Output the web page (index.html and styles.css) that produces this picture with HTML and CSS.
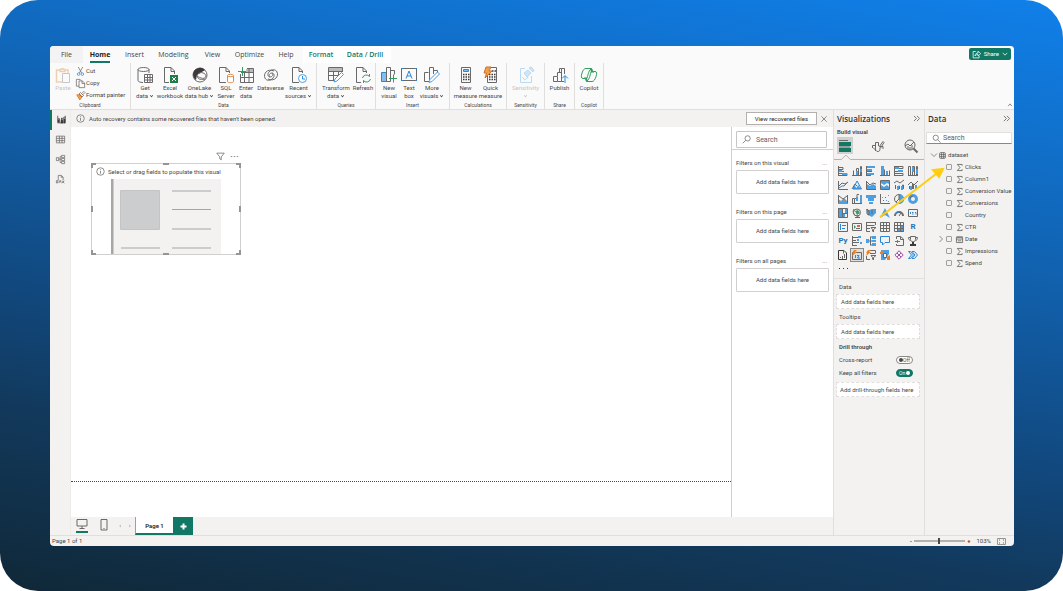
FILE: index.html
```html
<!DOCTYPE html>
<html lang="en">
<head>
<meta charset="utf-8">
<meta name="viewport" content="width=device-width, initial-scale=1">
<title>Report editor</title>
<link rel="stylesheet" href="styles.css">
</head>
<body>
<div class="backdrop">
<div class="app">

<header class="topbar">
  <nav class="tabs">
    <button class="tab file">File</button>
    <button class="tab active"><span>Home</span></button>
    <button class="tab">Insert</button>
    <button class="tab">Modeling</button>
    <button class="tab">View</button>
    <button class="tab">Optimize</button>
    <button class="tab">Help</button>
    <button class="tab context">Format</button>
    <button class="tab context">Data / Drill</button>
  </nav>
  <button class="share"><svg class="i9" viewBox="0 0 12 12"><path d="M5 2H1.500v8.500h8V8M4 8c0-3 2-4 4-4V1.500L11.500 5 8 8V6C6 6 5 6.500 4 8z"/></svg>Share<svg class="i6" viewBox="0 0 8 8"><path d="M1 2.500l3 3 3-3"/></svg></button>
</header>

<section class="ribbon">
  <div class="group clipboard">
    <div class="clip">
      <button class="tool off"><svg class="i16" viewBox="0 0 16 16"><path class="paleo" d="M5 3H1.500v12H7M10 3h3v3M5 4.500h5v-2H8.500a1 1 0 0 0-2 0H5z"/><path class="pale" d="M7.500 6.500h7v9h-7z"/></svg><span>Paste</span></button>
      <div class="stack">
        <button class="small"><svg class="i9" viewBox="0 0 12 12"><path d="M3 0l4.500 8M9 0L4.500 8"/><circle class="bl" cx="3.500" cy="9.500" r="1.700"/><circle class="bl" cx="8.500" cy="9.500" r="1.700"/></svg>Cut</button>
        <button class="small"><svg class="i9" viewBox="0 0 12 12"><path d="M4 9.500H.5v-9h5L7 2M4 2.500h4.500l3 3v6H4zM8 2.500V6h3.500"/></svg>Copy</button>
        <button class="small"><svg class="i9" viewBox="0 0 12 12"><path class="of" d="M1 5l5 0 2 3-3 4z"/><path d="M4 4l2-2 4 4-2 2zM8 3l2.500-2.500 1.500 1.500L9 5"/></svg>Format painter</button>
      </div>
    </div>
    <h6>Clipboard</h6>
  </div>
  <div class="group data">
    <div class="tools">
      <button class="tool"><svg class="i16" viewBox="0 0 16 16"><ellipse cx="6.500" cy="2.500" rx="5.500" ry="2"/><path d="M1 2.500v11c0 1 2 2 5 2M12 2.500V6"/><path class="w" d="M7.500 7.500h8v8h-8z"/><path d="M7 10.500h8.500M7 13h8.500M10.500 7.500v8M13 7.500v8"/></svg><span>Get<br>data<i></i></span></button>
      <button class="tool"><svg class="i16" viewBox="0 0 16 16"><path d="M7 15.500H2.500V.5H9L12.500 4v3M9 .5V4.500h3.500"/><path class="xl" d="M8 8h8v8H8z"/><path class="ws" d="M10 10l4 4M14 10l-4 4"/></svg><span>Excel<br>workbook</span></button>
      <button class="tool"><svg class="i16" viewBox="0 0 16 16"><circle cx="8" cy="8" r="7"/><path class="dk" d="M1 8a7 7 0 0 1 12-5L5 8 4 13A7 7 0 0 1 1 8z"/><path d="M5 8c4-5 9-1 9 1s-3 3-5 2-4-1-4-3zM5 9c1 4 5 4 8 3"/></svg><span>OneLake<br>data hub<i></i></span></button>
      <button class="tool"><svg class="i16" viewBox="0 0 16 16"><path d="M8 15.500H1.500V.5H8L11.500 4v2M8 .5V4.500h3.500"/><path class="wo" d="M9.500 9v5.500c0 1.500 6 1.500 6 0V9"/><ellipse class="wo" cx="12.500" cy="8.500" rx="3" ry="1.200"/></svg><span>SQL<br>Server</span></button>
      <button class="tool"><svg class="i16" viewBox="0 0 16 16"><path class="gf" d="M8 2h7v3H8z"/><path d="M9 1.500h6.500v14h-13V7M3 5.500h12.500M3 10.500h12.500M6.500 6v9M11 2v13"/><path class="gr" d="M0 4.500h8M4.500 0v9"/></svg><span>Enter<br>data</span></button>
      <button class="tool"><svg class="i16" viewBox="0 0 16 16"><path d="M11 4C4 1 0 7 2 11c1 3 6 3 8 0 2-2 1-5-1-5S5 8 7 10M5 12c7 3 11-3 9-7-1-3-6-3-8 0-2 2-1 5 1 5s4-2 2-4"/></svg><span>Dataverse</span></button>
      <button class="tool"><svg class="i16" viewBox="0 0 16 16"><path d="M8 15.500H1.500V.5H8L11.500 4v2M8 .5V4.500h3.500"/><circle class="wb" cx="11.500" cy="11.500" r="4"/><path class="bl" d="M11.500 9v3H14"/></svg><span>Recent<br>sources<i></i></span></button>
    </div>
    <h6>Data</h6>
  </div>
  <div class="group queries">
    <div class="tools">
      <button class="tool"><svg class="i16" viewBox="0 0 16 16"><path class="gf" d="M1 1h14v3H1z"/><path d="M.5.500h14V5M.5.500v13H6M.5 4.500h14M.5 8.500H10M5.500 4v9M10.500 4v4"/><path class="wb" d="M6 15l1-3 6.500-6.500 2 2L9 14z"/></svg><span>Transform<br>data<i></i></span></button>
      <button class="tool"><svg class="i16" viewBox="0 0 16 16"><path d="M6 15.500H1.500V.5H8L11.500 4v2M8 .5V4.500h3.500"/><path class="gr" d="M7.500 11a4 4 0 0 1 7-1.500V7M15.500 12a4 4 0 0 1-7 1.500V16"/></svg><span>Refresh</span></button>
    </div>
    <h6>Queries</h6>
  </div>
  <div class="group insert">
    <div class="tools">
      <button class="tool"><svg class="i16" viewBox="0 0 16 16"><path class="bf" d="M.5 5.500h5v9h-5z"/><path d="M5.500.5h4v14h-4zM9.500 3.500h4v4"/><path class="gr" d="M8 11.500h8M12.500 7.500v8"/></svg><span>New<br>visual</span></button>
      <button class="tool"><svg class="i16" viewBox="0 0 16 16"><path d="M.5 1.500h15v12H.5z"/><path class="bl" d="M5 11.500L8 4l3 7.500M6 9h4M0 1.500h2M14 1.500h2M0 13.500h2M14 13.500h2"/></svg><span>Text<br>box</span></button>
      <button class="tool"><svg class="i16" viewBox="0 0 16 16"><path d="M5 14.500H.5v-9h4M5.500 13V.500h4V7M9.500 3.500h4v3"/><path class="wb" d="M5 15.500l1-3 7.500-7.500 2 2L8 14.500z"/></svg><span>More<br>visuals<i></i></span></button>
    </div>
    <h6>Insert</h6>
  </div>
  <div class="group calc">
    <div class="tools">
      <button class="tool"><svg class="i16" viewBox="0 0 16 16"><path d="M3.500.5h9v15h-9z"/><path class="bf" d="M5.500 2.500h5v2h-5z"/><path class="dots" d="M5 7.500h6.500M5 10h6.500M5 12.500h6.500"/></svg><span>New<br>measure</span></button>
      <button class="tool"><svg class="i16" viewBox="0 0 16 16"><path d="M4.500.5h9v15h-9z"/><path class="dots" d="M6 7.500h6.500M6 10h6.500M6 12.500h6.500M9 4h4"/><path class="of" d="M3 0h5L6 4h3L2 11l1.500-5H1z"/></svg><span>Quick<br>measure</span></button>
    </div>
    <h6>Calculations</h6>
  </div>
  <div class="group sens">
    <div class="tools">
      <button class="tool off"><svg class="i16" viewBox="0 0 16 16"><path class="paleb" d="M7 1.500H2.500v14h11V9M4.500 10l2 3 4-3"/><path class="palef" d="M6 6l4-3 3 3-4 4zM11 1l2-1 3 3-1 2z"/></svg><span>Sensitivity<br><i></i></span></button>
    </div>
    <h6>Sensitivity</h6>
  </div>
  <div class="group pub">
    <div class="tools">
      <button class="tool"><svg class="i16" viewBox="0 0 16 16"><path d="M1.500 9.500h4v5h-4zM5.500 9V5.500h4v9h-4M9.500 9V1.500h-2V5M9.500 1.500h3V7M9.500 14.500H12"/><path class="bl" d="M13 16V9M10 11.500L13 8.500l3 3"/></svg><span>Publish</span></button>
    </div>
    <h6>Share</h6>
  </div>
  <div class="group pub last">
    <div class="tools">
      <button class="tool"><svg class="i16" viewBox="0 0 16 16"><path class="gr" d="M5 1.500h5c1 0 1.500 2 2 3h2c2 0 2 2 1 5s-2 5-4 5H6c-1 0-1.500-2-2-3H2C0 11.500 0 9 1 6s2-4.500 4-4.500z"/><path class="gr" d="M11 1.500C8 2 7 8 6 11M5 14.500c3-.5 4-6 5-9.500h3M3 11h3"/><path class="gfill" d="M9 2h2l1 3h-2zM4 11h2l1 3.500H5.500z"/></svg><span>Copilot</span></button>
    </div>
    <h6>Copilot</h6>
  </div>
  <button class="collapse" aria-label="Collapse ribbon"><svg class="i6" viewBox="0 0 8 8"><path d="M1.500 5.500l2.500-3 2.500 3"/></svg></button>
</section>

<main class="main">
  <nav class="rail">
    <button class="on" aria-label="Report view"><svg class="i9" viewBox="0 0 12 12"><path class="bold" d="M1 1v9.500h10V1M1 5h2.500v5M6 10V4h1v6M9 10V3h2"/><path class="dk" d="M1 6h2v4H1zM5 7h3v4H5zM9 5h2v6H9z"/></svg></button>
    <button aria-label="Table view"><svg class="i9" viewBox="0 0 12 12"><path d="M.5 1.500h11v9H.5zM.5 4.500h11M.5 7.500h11M4.500 1.500v9M8 1.500v9"/></svg></button>
    <button aria-label="Model view"><svg class="i9" viewBox="0 0 12 12"><path d="M.5 3.500h3v4h-3zM7.500.5h4v3h-4zM7.500 4.500h4v3h-4zM7.500 8.500h4v3h-4zM4 5.500h3M5.500 2v8H7M5.500 2H7"/></svg></button>
    <button aria-label="DAX query view"><svg class="i9" viewBox="0 0 12 12"><path d="M3 7V.5h4L9.500 3v4M7 .5V3h2.500M.5 7.500h2v3h-2zM4 10.500L5.500 7 7 10.500M8 7.500l3 3.500M11 7.500L8 11"/></svg></button>
  </nav>

  <div class="center">
    <div class="notice">
      <svg class="i9" viewBox="0 0 12 12"><circle cx="6" cy="6" r="5"/><path d="M6 5v4M6 3v1"/></svg>
      <p>Auto recovery contains some recovered files that haven't been opened.</p>
      <button class="recover">View recovered files</button>
      <button class="close" aria-label="Dismiss"><svg class="i6" viewBox="0 0 8 8"><path d="M.5.5l7 7M7.500.5l-7 7"/></svg></button>
    </div>
    <div class="work">
      <div class="canvas">
        <div class="visual">
          <div class="visualtools"><svg class="i9" viewBox="0 0 12 12"><path d="M1 1.500h10L7 6.500v4L5 9V6.500z"/></svg><svg class="i9" viewBox="0 0 12 12"><path d="M1 6h2M5 6h2M9 6h2"/></svg></div>
          <p class="hint"><svg class="i9" viewBox="0 0 12 12"><circle cx="6" cy="6" r="5"/><path d="M6 5v4M6 3v1"/></svg>Select or drag fields to populate this visual</p>
          <svg class="card" viewBox="0 0 110 75"><path class="c1" d="M0 0h110v75H0z"/><path class="c2" d="M0 0h2.500v75H0z"/><path class="c3" d="M9.500 11.500h39v39h-39z"/><path class="c4" d="M61 12h39M61 30.500h39M61 50h39M61 69h39M10 69h39"/></svg>
          <svg class="handles" viewBox="0 0 150 92"><path d="M1 5V1h4M72 1h6M145 1h4v4M149 43v6M149 87v4h-4M78 91h-6M5 91H1v-4M1 49v-6"/></svg>
        </div>
        <div class="pagebreak"></div>
      </div>
      <aside class="filters">
        <label class="find"><svg class="i9" viewBox="0 0 12 12"><circle cx="7.500" cy="4.500" r="3.500"/><path d="M5 7l-4 4"/></svg><input type="search" placeholder="Search" aria-label="Search filters"></label>
        <section><h4>Filters on this visual<b>...</b></h4><div class="drop">Add data fields here</div></section>
        <section><h4>Filters on this page<b>...</b></h4><div class="drop">Add data fields here</div></section>
        <section><h4>Filters on all pages<b>...</b></h4><div class="drop">Add data fields here</div></section>
      </aside>
    </div>
    <footer class="pages">
      <button class="desk" aria-label="Desktop layout"><svg class="i12" viewBox="0 0 12 12"><path d="M1 1.500h10v6.500H1zM6 8v2M3.500 10.500h5"/></svg></button>
      <button class="phone" aria-label="Mobile layout"><svg class="i12" viewBox="0 0 12 12"><path d="M3 .5h6v10.500H3zM5.500 9.500h1"/></svg></button>
      <button class="arrow" aria-label="Previous page"><svg class="i6" viewBox="0 0 8 8"><path d="M5 2L3 4l2 2z"/></svg></button>
      <button class="arrow" aria-label="Next page"><svg class="i6" viewBox="0 0 8 8"><path d="M3 2l2 2-2 2z"/></svg></button>
      <button class="page">Page 1</button>
      <button class="add" aria-label="New page"><svg class="i8" viewBox="0 0 7 7"><path d="M3.500.500v6M.5 3.500h6"/></svg></button>
    </footer>
  </div>

  <aside class="viz">
    <h2>Visualizations<svg class="i8" viewBox="0 0 8 8"><path d="M1 1l3 3-3 3M4.500 1l3 3-3 3"/></svg></h2>
    <h3>Build visual</h3>
    <div class="modes">
      <button class="sel" aria-label="Build visual"><svg class="i14" viewBox="0 0 14 14"><path d="M1 1.500h9M1 8h11"/><path class="teal" d="M1 3h12v4H1zM1 9h12v4H1z"/></svg></button>
      <button aria-label="Format visual"><svg class="i14" viewBox="0 0 14 14"><path d="M1.500 9V6.500h3V12M4.500 7V3.500h3V7M8 8l4-5.500 1 1L9.500 9M9 7.500h3V10M2 8.500l4 4c3 0 3-1 3-4"/></svg></button>
      <button aria-label="Analytics"><svg class="i14" viewBox="0 0 14 14"><circle cx="6" cy="6" r="5"/><path d="M1 7l3-2 2 2 4-4M4 7v3M6 8v3M8 6v4"/><path class="thick" d="M9.500 9.500l4 4"/></svg></button>
    </div>
    <svg class="notch" viewBox="0 0 91 6" preserveAspectRatio="xMinYMid meet"><path d="M0 5.500h7.500L12 1l4.500 4.500H91"/></svg>
    <div class="gallery">
      <button aria-label="Stacked bar chart"><svg viewBox="0 0 10 10"><path d="M.5 0v10M1 1.500h4v2H1M1 7.500h8v2H1M1 5.500h5"/><path class="b" d="M1 4h3v2H1zM4 7h5v2H4z"/></svg></button>
      <button aria-label="Stacked column chart"><svg viewBox="0 0 10 10"><path d="M0 9.500h10M1.500 9V4.500M4.500 9V2.500h2V9M8.500 9V.500h1V9"/><path class="b" d="M4 5h2v4H4zM8 3h2v3H8z"/></svg></button>
      <button aria-label="Clustered bar chart"><svg viewBox="0 0 10 10"><path d="M.5 0v10M1 5.500h5M1 9.500h4"/><path class="b" d="M1 0h8v2H1zM1 3h5v2H1zM1 7h7v2H1z"/></svg></button>
      <button aria-label="Clustered column chart"><svg viewBox="0 0 10 10"><path d="M0 9.500h10M4.500 9V3.500M9.500 9V4.500"/><path class="b" d="M1 0h3v9H1zM6 5h2v4H6z"/></svg></button>
      <button aria-label="100% stacked bar chart"><svg viewBox="0 0 10 10"><path d="M.5 0v10M1 .500h8v2H1M1 7.500h8v2H1M1 5.500h5"/><path class="b" d="M1 1h4v2H1zM4 4h5v2H4z"/></svg></button>
      <button aria-label="100% stacked column chart"><svg viewBox="0 0 10 10"><path d="M0 9.500h10M.500 9V.500h2V9M4.500 9V.500h2V9M8.500 9V.500h1V9"/><path class="b" d="M4 1h2v5H4zM8 3h2v5H8z"/></svg></button>

      <button aria-label="Line chart"><svg viewBox="0 0 10 10"><path d="M.5 1v8.500H10M1 6l3-3 3 1 3-2"/><path class="l" d="M1 8l3-2 2 0 4-4"/></svg></button>
      <button aria-label="Area chart"><svg viewBox="0 0 10 10"><path d="M0 9l3-5 2 2"/><path class="b" d="M4 9l2-4 3 4zM0 9l3-3 2 3z"/><path class="l" d="M1 9L5 1l4.500 8z"/></svg></button>
      <button aria-label="Stacked area chart"><svg viewBox="0 0 10 10"><path d="M.5 1v8.500H10M1 2l3 3 3-2 3 1"/><path class="b" d="M1 4l3 2 3-2 3 2v3H1z"/></svg></button>
      <button aria-label="100% stacked area chart"><svg viewBox="0 0 10 10"><path d="M.5.500h9v9h-9z"/><path class="b" d="M1 1h8v3L7 3 4 5 1 3zM1 5l3 2 3-2 2 2v2H1z"/></svg></button>
      <button aria-label="Line and stacked column chart"><svg viewBox="0 0 10 10"><path d="M1.500 9V5M4.500 9V6h1v3M8.500 9V5h1v4M0 3l3-2 3 2 4-3"/><path class="b" d="M3 6h2v4H3zM7 6h2v4H7z"/></svg></button>
      <button aria-label="Line and clustered column chart"><svg viewBox="0 0 10 10"><path d="M1.500 9V6M4.500 9V4h1v5M0 5l3-3 3 3 4-4"/><path class="b" d="M2 6h2v4H2zM7 5h2v5H7z"/></svg></button>

      <button aria-label="Ribbon chart"><svg viewBox="0 0 10 10"><path class="b" d="M0 5l3 2 3-3 4 4v2H0z"/><path d="M.500 1v8M9.500 1v8M1 2l4 3 4-3"/><path class="o" d="M1 6l3 2 3-2v2H1z"/></svg></button>
      <button aria-label="Waterfall chart"><svg viewBox="0 0 10 10"><path d="M0 9.500h10M.5 9V4.500h2V9M3 4.500h2V.5h2"/><path class="b" d="M4 3h2v4H4zM8 1h2v8H8z"/></svg></button>
      <button aria-label="Funnel chart"><svg viewBox="0 0 10 10"><path class="b" d="M0 1h10v3H0zM2 4h6v3H2zM3 8h4v2H3z"/></svg></button>
      <button aria-label="Scatter chart"><svg viewBox="0 0 10 10"><path d="M.5 0v9.500H10M3 6.500h1M5 3.500h1"/><path class="b" d="M2 3h1v1H2zM8 1h1v1H8zM6 6h1v1H6zM8 7h1v1H8z"/></svg></button>
      <button aria-label="Pie chart"><svg viewBox="0 0 10 10"><circle cx="5" cy="5" r="4.500"/><path class="b" d="M5 0a5 5 0 0 1 0 10z"/><path d="M5 0v5l-3 3"/></svg></button>
      <button aria-label="Donut chart"><svg viewBox="0 0 10 10"><circle class="donut" cx="5" cy="5" r="3.500"/><path d="M5 2a3 3 0 0 0-3 3"/></svg></button>

      <button aria-label="Treemap"><svg viewBox="0 0 10 10"><path class="b" d="M0 0h4v10H0zM7 1h3v4H7zM5 6h2v3H5z"/><path d="M.5.500h9v9h-9zM4.500 1v8M5 5.500h4"/></svg></button>
      <button aria-label="Map"><svg viewBox="0 0 10 10"><circle cx="5" cy="4.500" r="3.500"/><path class="g" d="M3 3l3-1 2 3-3 2z"/><path d="M2 1c-2 3 0 7 4 7v2M3 9.500h5"/></svg></button>
      <button aria-label="Filled map"><svg viewBox="0 0 10 10"><path class="b" d="M0 1l3 1 3-1 4 0v4l-4 4-4-2z"/><path d="M1 1l2 2v4L1 6zM6 2v4"/></svg></button>
      <button aria-label="Azure map"><svg viewBox="0 0 10 10"><path class="b" d="M5 0l5 10-5-3-5 3z"/></svg></button>
      <button aria-label="Gauge"><svg viewBox="0 0 10 10"><path class="thick" d="M1 8a4 4 0 0 1 8 0"/><path class="l" d="M1 8a4 4 0 0 1 4-4"/><path d="M5 8l2-3"/></svg></button>
      <button aria-label="Card"><svg viewBox="0 0 10 10"><path d="M.5 1.500h9v7h-9z"/><path class="l" d="M2.500 4v2M4 4.500h1.500M4 6h1.500M7 4.500h1v2"/></svg></button>

      <button aria-label="Multi-row card"><svg viewBox="0 0 10 10"><path d="M.5.500h9v9h-9z"/><path class="l" d="M2.500 2v6M4 3.500h4M4 6.500h3"/></svg></button>
      <button aria-label="KPI"><svg viewBox="0 0 10 10"><path d="M.5 1.500h9v7h-9z"/><path class="r" d="M5 3h3v2H5z"/><path class="g" d="M2 3l2 2-2 2z"/><path d="M4 6.500h4"/></svg></button>
      <button aria-label="Slicer"><svg viewBox="0 0 10 10"><path d="M0 .500h10M.5.500v9H4M.5 3.500h8M.5 6.500H4M9.500 1v2M5 5.500h5L7.500 7.500V10L6.500 9V7.500z"/></svg></button>
      <button aria-label="Table"><svg viewBox="0 0 10 10"><path d="M.5.500h9v9h-9zM.5 3.500h9M.5 6.500h9M3.500.500v9M6.500.500v9"/></svg></button>
      <button aria-label="Matrix"><svg viewBox="0 0 10 10"><path class="b" d="M4 7h6v3H4zM7 4h3v3H7z"/><path d="M.5.500h9v9h-9zM.5 3.500h9M.5 6.500h9M3.500.500v9M6.500.500v9"/></svg></button>
      <button class="letters" aria-label="R script visual">R</button>

      <button class="letters" aria-label="Python visual">Py</button>
      <button aria-label="Key influencers"><svg viewBox="0 0 10 10"><path d="M.5 0v10M1 1.500h5M1 4.500h3M1 6.500h6M1 9.500h4"/><path class="b" d="M6 0h3v2H6zM8 6h2v2H8zM5 3h2v2H5z"/></svg></button>
      <button aria-label="Decomposition tree"><svg viewBox="0 0 10 10"><path d="M2 5h4M4.500 1v8M4 1h2M4 9h2"/><path class="b" d="M0 3h3v4H0zM6 0h4v3H6zM6 4h4v2H6zM6 7h4v3H6z"/></svg></button>
      <button aria-label="Q&amp;A"><svg viewBox="0 0 10 10"><path class="l" d="M.5.500h9v6H5L2.500 9V6.500h-2z"/></svg></button>
      <button aria-label="Smart narrative"><svg viewBox="0 0 10 10"><path d="M2.500 3V.5h4L9.500 3v6.500h-7V8M6.500 1v2.500h3"/><path class="l" d="M1 5.500h5M3.500 4v3"/></svg></button>
      <button aria-label="Metrics"><svg viewBox="0 0 10 10"><path d="M2.500.500h5v3c0 3-5 3-5 0zM2 1.500H.5c0 2 1 3 2 3M8 1.500h1.500c0 2-1 3-2 3"/><path class="dk" d="M4 6h2v2h2v2H2V8h2z"/></svg></button>

      <button aria-label="Paginated report"><svg viewBox="0 0 10 10"><path class="bold" d="M.5.500H6L8.500 3v6.500h-8z"/><path d="M2 7.500h1M4.500 6v3M6.500 4v4M5.500.500v3"/></svg></button>
      <button class="picked" aria-label="Card (new)"><svg viewBox="0 0 10 10"><path d="M.5 2.500h9v7h-9z"/><path class="l" d="M3.500 5v3M5 5.500h2L5.500 8H8"/><path class="o" d="M2 0h3L3 2h2L0 6l1-3H0z"/></svg></button>
      <button aria-label="Slicer (new)"><svg viewBox="0 0 10 10"><path d="M3 .500h6.500v3M.5 6v3.500H4M4 3.500h5M5 5.500h5L7.500 7.500V10L6.500 9V7.500z"/><path class="o" d="M2 0h3L3 2h2L0 6l1-3H0z"/></svg></button>
      <button aria-label="Power Apps"><svg viewBox="0 0 10 10"><path class="b" d="M1 0h8v4L5 10H1z"/><path class="w" d="M3.500 3.500h3v4h-3z"/><path class="o" d="M0 2l4-2-1 4H0zM7 7l3-2v5H7z"/></svg></button>
      <button aria-label="Power Apps visual"><svg viewBox="0 0 10 10"><path class="p" d="M5 .800L9.200 5 5 9.200.800 5zM3 3l4 4M7 3L3 7"/></svg></button>
      <button aria-label="Power Automate"><svg viewBox="0 0 10 10"><path class="l" d="M.5 1.500h2l3 3.500-3 3.500h-2l3-3.500zM4 1.500h2.500L9.500 5l-3 3.500H4L7 5z"/></svg></button>
    </div>
    <button class="more" aria-label="Get more visuals"><svg viewBox="0 0 9 3"><path d="M0 1.500h1M4 1.500h1M8 1.500h1"/></svg></button>
    <div class="wells">
      <h4>Data</h4><div class="well">Add data fields here</div>
      <h4>Tooltips</h4><div class="well">Add data fields here</div>
      <h4 class="strong">Drill through</h4>
      <label class="switch">Cross-report<input type="checkbox" role="switch"><span class="off">Off</span></label>
      <label class="switch">Keep all filters<input type="checkbox" role="switch" checked><span class="onn">On</span></label>
      <div class="well last">Add drill-through fields here</div>
    </div>
  </aside>

  <aside class="fields">
    <h2>Data<svg class="i8" viewBox="0 0 8 8"><path d="M1 1l3 3-3 3M4.500 1l3 3-3 3"/></svg></h2>
    <label class="find"><svg class="i9" viewBox="0 0 12 12"><circle cx="5" cy="5" r="3.500"/><path d="M7.500 7.500l4 4"/></svg><input type="search" placeholder="Search" aria-label="Search data"></label>
    <div class="set"><svg class="i6" viewBox="0 0 8 8"><path d="M0 2l4 4 4-4"/></svg><svg class="i8" viewBox="0 0 12 12"><rect class="bold" x="1" y="1" width="10" height="10" rx="2"/><path class="bold" d="M1 4.500h10M1 8h10M4.500 1v10M8 1v10"/></svg>dataset</div>
    <ul>
      <li><label><i></i><input type="checkbox"><svg class="i8" viewBox="0 0 8 8"><path d="M7 2V.500H1.500L4.500 4l-3 3.500H7V6"/></svg>Clicks</label></li>
      <li><label><i></i><input type="checkbox"><svg class="i8" viewBox="0 0 8 8"><path d="M7 2V.500H1.500L4.500 4l-3 3.500H7V6"/></svg>Column1</label></li>
      <li><label><i></i><input type="checkbox"><svg class="i8" viewBox="0 0 8 8"><path d="M7 2V.500H1.500L4.500 4l-3 3.500H7V6"/></svg>Conversion Value</label></li>
      <li><label><i></i><input type="checkbox"><svg class="i8" viewBox="0 0 8 8"><path d="M7 2V.500H1.500L4.500 4l-3 3.500H7V6"/></svg>Conversions</label></li>
      <li><label><i></i><input type="checkbox"><svg class="i8" viewBox="0 0 8 8"></svg>Country</label></li>
      <li><label><i></i><input type="checkbox"><svg class="i8" viewBox="0 0 8 8"><path d="M7 2V.500H1.500L4.500 4l-3 3.500H7V6"/></svg>CTR</label></li>
      <li><label><i><svg class="i6" viewBox="0 0 8 8"><path d="M2 0l4 4-4 4"/></svg></i><input type="checkbox"><svg class="i8" viewBox="0 0 8 8"><path d="M.5 1.500h7v6h-7zM.5 1h7M.5 3.500h7M2 5.500h4"/></svg>Date</label></li>
      <li><label><i></i><input type="checkbox"><svg class="i8" viewBox="0 0 8 8"><path d="M7 2V.500H1.500L4.500 4l-3 3.500H7V6"/></svg>Impressions</label></li>
      <li><label><i></i><input type="checkbox"><svg class="i8" viewBox="0 0 8 8"><path d="M7 2V.500H1.500L4.500 4l-3 3.500H7V6"/></svg>Spend</label></li>
    </ul>
  </aside>
  <svg class="pointer" viewBox="0 0 66 52"><path d="M1 50L57 7"/><path class="head" d="M64 2l-4 8-6-7z"/></svg>
</main>

<footer class="status">
  <span>Page 1 of 1</span>
  <div class="zoom"><b>-</b><input type="range" min="10" max="200" value="103" aria-label="Zoom"><b>+</b><span>103%</span><svg class="i9" viewBox="0 0 9 9"><path class="fit" d="M.5 1.500h8v6h-8z"/><path d="M2 3h1M6 3h1M2 6h1M6 6h1"/></svg></div>
</footer>
</div>
</div>
</body>
</html>
```
FILE: styles.css
```css
* { box-sizing: border-box; }
body { margin: 0; background: #fff; font: 6px/8px Roboto, "Open Sans", sans-serif; color: #484644; }
button, input { font: inherit; color: inherit; margin: 0; padding: 0; border: 0; background: none; }
h2, h3, h4, h6, p, ul { margin: 0; padding: 0; font-size: 6px; font-weight: 400; }
svg { display: block; flex: none; fill: none; stroke: #6b6967; overflow: visible; }

.backdrop { display: flex; min-height: 100vh; padding: 46px 49px 45px 50px; border-radius: 38px; background: linear-gradient(10deg, #102838 0%, #12395c 24%, #114577 36%, #1161ae 64%, #1080ea 100%); }
.app { flex: 1; display: flex; flex-direction: column; min-width: 0; border-radius: 4px; overflow: hidden; background: #f3f2f1; }

.i6 { width: 6px; height: 6px; }
.i8 { width: 7px; height: 7px; }
.i9 { width: 9px; height: 9px; }
.i12 { width: 12px; height: 12px; }
.i14 { width: 14px; height: 14px; }
.i16 { width: 16px; height: 16px; }
.bl, .l { stroke: #2b88d8; }
.b { fill: #4b9fe3; stroke: none; }
.bf { fill: #83beec; stroke: #2b88d8; }
.wb { fill: #fff; stroke: #4b9fe3; }
.wo { fill: #fff; stroke: #e08a45; }
.of { fill: #f0a04b; stroke: #d0702a; }
.o { fill: #e8822e; stroke: none; }
.gr { stroke: #2f9e5e; }
.gfill { fill: #2f9e5e; stroke: none; }
.g { fill: #3f9a62; stroke: none; }
.r { fill: #d9655e; stroke: none; }
.p { stroke: #a24ba8; }
.w { fill: #fff; }
.ws { stroke: #fff; }
.gf { fill: #bdbbb9; stroke: none; }
.xl { fill: #1d7f45; stroke: none; }
.dk { fill: #3b3a39; stroke: none; }
.teal { fill: #117865; stroke: none; }
.thick { stroke-width: 2; }
.bold { stroke: #3b3a39; }
.donut { stroke: #4b9fe3; stroke-width: 3; }
.dots { stroke: #3b3a39; stroke-width: 1.5; stroke-dasharray: 1.5 1; }
.pale { fill: #fafafa; stroke: #c8c6c4; }
.paleo { stroke: #f1cfae; stroke-width: 1.5; }
.paleb { stroke: #b8daf2; }
.palef { fill: #cfe5f5; stroke: #b8daf2; }
.fit { stroke: #979593; }

.topbar { display: flex; justify-content: space-between; height: 17px; background: #fafafa; }
.tabs { display: grid; grid-template-columns: 33px 34px 35px 43px 35px 39px 34px 36px 52px; font-family: "Open Sans", sans-serif; font-size: 7px; }
.tab { white-space: nowrap; }
.tab.file { background: #f3f3f3; }
.tab.active { font-weight: 700; color: #252423; }
.tab.active span { padding-bottom: 2px; border-bottom: 2px solid #117865; }
.tab.context { background: #fff; color: #117865; font-weight: 600; }
.share { display: flex; align-items: center; gap: 3px; height: 12px; margin: 2px 3px 0 0; padding: 0 3px; border-radius: 2px; background: #117865; color: #fff; }
.share svg { stroke: #fff; }

.ribbon { display: flex; height: 47px; background: #fafafa; border-bottom: 1px solid #e1dfdd; }
.group { display: flex; flex-direction: column; justify-content: space-between; height: 46px; border-right: 1px solid #e1dfdd; }
.group h6 { text-align: center; font-size: 5px; line-height: 7px; }
.clipboard { width: 81px; }
.clip { display: flex; }
.clip .tool { width: 26px; }
.stack { display: flex; flex-direction: column; gap: 4px; padding-top: 4px; }
.small { display: flex; align-items: center; gap: 1px; height: 8px; white-space: nowrap; }
.tools { display: grid; }
.data .tools { grid-template-columns: 24px 26px 33px 20px 20px 29px 27px; padding: 0 4px 0 2px; }
.queries .tools { grid-template-columns: 32px 22px; padding: 0 1px 0 3px; }
.insert .tools { grid-template-columns: 20px 20px 26px; padding: 0 4px 0 3px; }
.calc .tools { grid-template-columns: 25px 25px; padding: 0 3px; }
.sens .tools { grid-template-columns: 37px; }
.pub .tools { grid-template-columns: 29px; }
.pub.last .tools { grid-template-columns: 28px; }
.tool { display: flex; flex-direction: column; align-items: center; gap: 1px; padding-top: 4px; white-space: nowrap; }
.tool span { margin: 0 -4px; }
.tool.off { color: #c8c6c4; }
.tool i { display: inline-block; width: 3px; height: 3px; margin: 0 1px 1px 2px; border: solid currentColor; border-width: 0 1px 1px 0; transform: rotate(45deg) scale(.8); }
.collapse { align-self: flex-end; margin: 0 1px 1px auto; }

.main { position: relative; flex: 1; display: grid; grid-template-columns: 21px 1fr 91px 90px; min-height: 0; }
.rail { display: flex; flex-direction: column; border-right: 1px solid #edebe9; }
.rail button { display: flex; align-items: center; justify-content: center; height: 20px; padding-bottom: 1px; }
.rail .on { border-left: 2px solid #117865; }
.center { display: flex; flex-direction: column; min-width: 0; }
.notice { display: flex; align-items: center; height: 17px; padding: 0 6px 0 5px; gap: 4px; }
.recover { height: 13px; margin-left: auto; padding: 0 8px; background: #fff; border: 1px solid #b3b0ad; color: #252423; white-space: nowrap; }
.work { flex: 1; display: grid; grid-template-columns: 1fr 102px; background: #fff; }
.canvas { position: relative; }
.visual { position: absolute; left: 20px; top: 36px; width: 150px; height: 92px; padding: 3px 4px; border: 1px solid #d2d0ce; }
.visualtools { position: absolute; right: 1px; top: -12px; display: flex; gap: 5px; }
.hint { display: flex; align-items: center; gap: 3px; height: 9px; white-space: nowrap; }
.card { width: 110px; height: 75px; margin: 3px 0 0 15px; }
.handles { position: absolute; left: -1px; top: -1px; width: 150px; height: 92px; stroke-width: 2; }
.handles path { stroke: #979593; }
.c1 { fill: #f3f2f1; stroke: none; }
.c2 { fill: #a6a6a6; stroke: none; }
.c3 { fill: #cccdcf; stroke: #c4c4c4; }
.c4 { stroke: #a6a6a6; }
.pagebreak { position: absolute; left: 0; right: 0; bottom: 35px; border-top: 1px dotted #484644; }

.filters { padding: 4px; border-left: 1px solid #d2d0ce; }
.find { display: flex; align-items: center; background: #fff; }
.find input { flex: 1; min-width: 0; font-size: 7px; outline: 0; }
.find input::placeholder { color: #605e5c; opacity: 1; }
.filters .find { height: 17px; margin: 0 2px 1px 0; padding: 0 5px; gap: 5px; border: 1px solid #c8c6c4; border-radius: 1px; }
.filters section { margin: 0 -4px; padding: 13px 4px 0; }
.filters section:first-of-type { padding-top: 8px; border-top: 1px solid #d2d0ce; }
.filters h4 { display: flex; justify-content: space-between; line-height: 9px; margin-bottom: 3px; padding-right: 2px; white-space: nowrap; }
.filters h4 b { font-weight: 400; }
.drop { display: grid; place-items: center; height: 24px; border: 1px solid #d2d0ce; border-radius: 1px; }

.pages { display: flex; height: 18px; }
.pages button { display: flex; align-items: center; justify-content: center; }
.pages .desk { width: 12px; margin: 0 5px 2px; border-bottom: 2px solid #117865; }
.pages .phone { width: 22px; padding-bottom: 3px; }
.pages .arrow { width: 10px; }
.pages .arrow path { stroke: none; fill: #b3b0ad; }
.pages .page { width: 38px; padding-top: 2px; background: #fff; border-left: 1px solid #a19f9d; border-bottom: 2px solid #117865; color: #252423; font-weight: 600; }
.pages .add { width: 20px; background: #117865; }
.pages .add svg { stroke: #fff; stroke-width: 2; }

.viz { border-left: 1px solid #e1dfdd; }
h2 { display: flex; align-items: center; justify-content: space-between; height: 17px; padding: 0 4px 0 3px; font-family: "Open Sans", sans-serif; font-size: 8px; font-weight: 600; color: #323130; }
h3 { padding-left: 3px; font-weight: 600; line-height: 10px; }
.modes { display: grid; grid-template-columns: repeat(3, 33px); margin-left: 3px; height: 17px; }
.modes button { display: grid; place-items: center; width: 16px; height: 17px; }
.modes .sel { background: #d2d0ce; }
.notch { width: 90px; height: 6px; }
.notch path { stroke: #b3b0ad; }
.gallery { display: grid; grid-template-columns: repeat(6, 14px); grid-auto-rows: 14px; padding: 4px 0 0 2px; }
.gallery button { display: grid; place-items: center; }
.gallery svg { width: 10px; height: 10px; }
.gallery .picked { outline: 1px solid #8a8886; outline-offset: -1px; background: #e1dfdd; }
.gallery .letters { font-size: 8px; font-weight: 700; color: #2774b8; }
.more { display: block; height: 12px; padding-left: 5px; }
.more svg { width: 9px; height: 3px; stroke: #3b3a39; }
.wells { padding: 3px 4px 0 2px; border-top: 1px solid #e1dfdd; margin-top: 4px; }
.wells h4 { padding: 0 0 2px 3px; line-height: 10px; }
.wells .strong { font-weight: 600; padding-bottom: 1px; }
.well { height: 15px; margin-bottom: 3px; padding: 3px 4px; background: #fff; border: 1px dashed #e1dfdd; white-space: nowrap; }
.well.last { margin-top: 3px; padding: 3px; }
.switch { position: relative; display: flex; align-items: center; justify-content: space-between; height: 13px; padding: 0 7px 0 3px; }
.switch input { position: absolute; right: 7px; width: 17px; height: 8px; opacity: 0; }
.switch span { display: flex; align-items: center; justify-content: space-between; width: 17px; height: 8px; padding: 0 2px; border: 1px solid #8a8886; border-radius: 4px; background: #fff; font-size: 5px; line-height: 6px; }
.switch .off::before, .switch .onn::after { content: ""; flex: none; width: 4px; height: 4px; border-radius: 50%; background: #484644; }
.switch .onn { background: #117865; border-color: #117865; color: #fff; }
.switch .onn::after { background: #fff; }

.fields { border-left: 1px solid #e1dfdd; min-width: 0; }
.fields .find { height: 12px; margin: 5px 2px 0 1px; padding: 0 5px; gap: 2px; border: 1px solid #e1dfdd; border-bottom-color: #8a8886; }
.set { display: flex; align-items: center; gap: 2px; height: 12px; margin-top: 5px; padding-left: 6px; }
.fields ul { list-style: none; padding-left: 13px; }
.fields label:not(.find) { display: flex; align-items: center; height: 12px; white-space: nowrap; }
.fields li i { width: 8px; }
.fields li input { appearance: none; width: 6px; height: 6px; margin-right: 4px; border: 1px solid #a19f9d; border-radius: 1px; }
.fields li svg.i8 { margin-right: 2px; }
.pointer { position: absolute; right: 69px; top: 57px; width: 66px; height: 52px; pointer-events: none; }
.pointer path { stroke: #ffcd11; stroke-width: 2; }
.pointer .head { fill: #ffcd11; }

.status { display: flex; align-items: center; justify-content: space-between; height: 11px; padding: 0 8px 0 2px; border-top: 1px solid #e1dfdd; }
.zoom { display: flex; align-items: center; gap: 2px; }
.zoom span { margin: 0 4px; }
.zoom input { appearance: none; width: 51px; height: 2px; background: #b3b0ad; }
.zoom input::-webkit-slider-thumb { appearance: none; width: 2px; height: 6px; background: #484644; }
```
